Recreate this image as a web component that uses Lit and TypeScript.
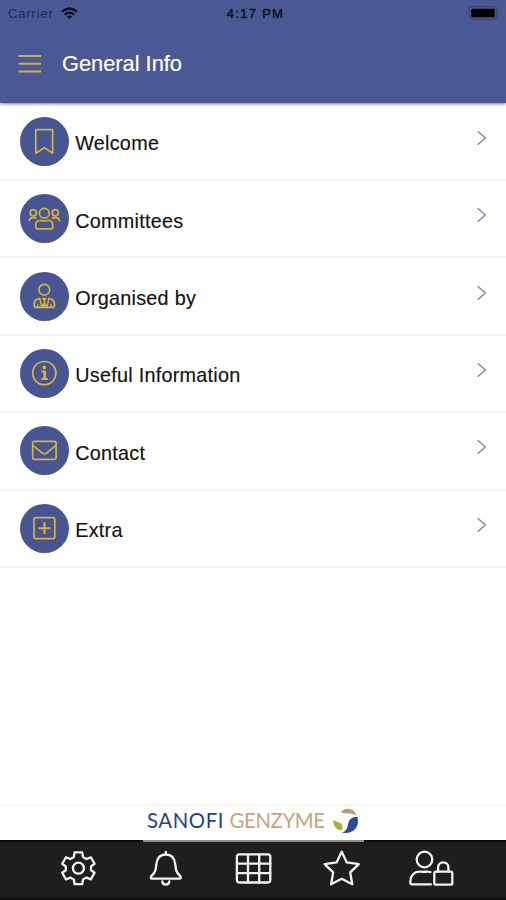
import { LitElement, html, svg, css } from "lit";
import { customElement } from "lit/decorators.js";

// Row icons are drawn on a 49x49 disc centred at 24.5,24.5.
const bookmark = svg`<path d="M15.8 12.6H32.6V36.2L24.2 30.6L15.8 36.2Z"/>`;
const group = svg`
  <circle cx="24.3" cy="19.3" r="4.9"/>
  <circle cx="13.3" cy="18.7" r="3.1"/><circle cx="35.3" cy="18.7" r="3.1"/>
  <path d="M19.5 26.5C21.5 26.2 22.4 27 24.3 27S27.1 26.2 29.1 26.5C31.7 26.8 32.8 29 32.8 31.3V33.2Q32.8 34.8 31 34.8H17.6Q15.8 34.8 15.8 33.2V31.3C15.8 29 16.9 26.8 19.5 26.5Z"/>
  <path d="M9.1 27.3C9.3 24.6 11 23.7 13.5 23.7Q15.4 23.7 16.7 24.6M39.5 27.3C39.3 24.6 37.6 23.7 35.1 23.7Q33.2 23.7 31.9 24.6"/>`;
const manager = svg`
  <circle cx="24.3" cy="17.7" r="5.4"/>
  <path d="M20.2 26.4C16.4 26.7 14.2 29.2 14.2 32.4V33.7Q14.2 35.4 16 35.4H32.6Q34.4 35.4 34.4 33.7V32.4C34.4 29.2 32.2 26.7 28.4 26.4"/>
  <path d="M19.8 26.5L21.6 35.2L24.3 31L27 35.2L28.8 26.5M22.8 26.4H25.8L24.3 28.4ZM24.3 28.4V34.8M17.6 32.3V35M31 32.3V35" stroke-width="1.5"/>`;
const info = svg`
  <circle cx="24.3" cy="24.1" r="11.6"/>
  <circle cx="24.2" cy="18.4" r="1.9" fill="#d9b33c" stroke="none"/>
  <path d="M21.3 22.5H25.1V29.6M21.3 30H27.8" stroke-width="2"/><path d="M24.5 22.5V30" stroke-width="2.4"/>`;
const mail = svg`
  <rect x="12.7" y="15.3" width="23.4" height="18" rx="1.6"/>
  <path d="M13 19.3L21.4 26.3Q24.4 29.3 27.4 26.3L35.8 19.3"/>`;
const plus = svg`
  <rect x="14" y="13.6" width="20.8" height="21" rx="1.8"/>
  <path d="M24.4 18.3V30M18.4 24.2H30.4" stroke-width="2"/>`;

const ROWS = [
  { label: "Welcome", icon: bookmark },
  { label: "Committees", icon: group },
  { label: "Organised by", icon: manager },
  { label: "Useful Information", icon: info },
  { label: "Contact", icon: mail },
  { label: "Extra", icon: plus },
];

@customElement("app-root")
export class AppRoot extends LitElement {
  static styles = css`
    :host {
      display: flex;
      flex-direction: column;
      height: 900px;
      box-sizing: border-box;
      background: #fff;
      font-family: "Liberation Sans", Arial, sans-serif;
      color: #111;
      overflow: hidden;
    }
    svg { display: block; }
    .header {
      flex: none;
      height: 103px;
      background: #4a5993;
      box-shadow: 0 1px 3px rgba(0, 0, 0, 0.5);
      z-index: 1;
    }
    .status {
      height: 26px;
      display: grid;
      grid-template-columns: 1fr auto 1fr;
      align-items: center;
      padding: 0 6px 0 8px;
      font-size: 13px;
      color: #10121c;
    }
    .carrier { display: flex; align-items: center; gap: 8px; letter-spacing: 0.85px; color: #252c48; }
    .carrier svg { margin-left: -1px; }
    .time { margin-left: 3px; letter-spacing: 1.3px; -webkit-text-stroke: 0.5px #10121c; }
    .battery { justify-self: end; }
    .bar { height: 77px; display: flex; align-items: center; padding: 0 18px; }
    .menu { margin-bottom: 2px; }
    .title {
      margin: 0 0 1px 20px;
      font-size: 21.8px;
      font-weight: 400;
      color: #fff;
      line-height: 26px;
      -webkit-text-stroke: 0.2px #fff;
    }
    .list { flex: 1; margin: 0; padding: 0.6px 0 0; list-style: none; }
    .row {
      height: 77.4px;
      box-sizing: border-box;
      border-bottom: 2px solid #f3f3f4;
      display: flex;
      align-items: center;
      padding: 0 19px 0 20px;
    }
    .disc { width: 49px; height: 49px; border-radius: 50%; background: #475593; }
    .label {
      flex: 1;
      margin: 4px 0 0 6.2px;
      font-size: 19.8px;
      letter-spacing: 0.27px;
      line-height: 24px;
      -webkit-text-stroke: 0.15px #111;
    }
    .chevron { margin-bottom: 7px; }
    .sponsor {
      flex: none;
      height: 34px;
      border-top: 2px solid #f7f7f7;
      display: flex;
      justify-content: center;
      padding-right: 1px;
    }
    .tabs {
      flex: none;
      height: 60px;
      box-sizing: border-box;
      background: linear-gradient(#1e1e1c 55px, #130d10 57px);
      border-top: 2px solid;
      border-image: linear-gradient(90deg, #0b0b0a 143px, #8d8d85 143px, #8d8d85 364px, #0b0b0a 364px) 1;
      display: flex;
      justify-content: center;
    }
  `;

  render() {
    return html`
      <header class="header">
        <div class="status">
          <div class="carrier">
            <span>Carrier</span>
            <svg width="17" height="13" viewBox="0 0 17 13" fill="none" stroke="#0c0e18" stroke-width="2.2">
              <path d="M1 4.7Q8.5-1.7 16 4.7M3.7 7.7Q8.5 3.6 13.3 7.7"/>
              <path d="M5.9 9.6Q8.5 7.5 11.1 9.6L8.5 12.3Z" fill="#0c0e18" stroke="none"/>
            </svg>
          </div>
          <div class="time">4:17 PM</div>
          <svg class="battery" width="32" height="14" viewBox="0 0 32 14">
            <rect x="1" y="0.6" width="27.6" height="12.8" rx="3" fill="none" stroke="#3c4672" stroke-width="1.2"/>
            <rect x="3.2" y="2.8" width="23.6" height="8.4" rx="1" fill="#000"/>
            <path d="M29.8 4.7Q32 7 29.8 9.3Z" fill="#3c4672"/>
          </svg>
        </div>
        <div class="bar">
          <svg class="menu" width="24" height="20" viewBox="0 0 24 20" stroke="#cdb05a" stroke-width="2">
            <path d="M0.5 2H23M0.5 9.7H23M0.5 17.4H23"/>
          </svg>
          <h1 class="title">General Info</h1>
        </div>
      </header>
      <ul class="list">
        ${ROWS.map(
          (row) => html`
            <li class="row">
              <div class="disc">
                <svg width="49" height="49" viewBox="0 0 49 49" fill="none" stroke="#d9b33c" stroke-width="1.7" stroke-linejoin="round">${row.icon}</svg>
              </div>
              <span class="label">${row.label}</span>
              <svg class="chevron" width="11" height="16" viewBox="0 0 11 16" fill="none" stroke="#7c7fa8" stroke-width="1.3">
                <path d="M1.7 1.2L9.4 8L1.7 14.8"/>
              </svg>
            </li>
          `
        )}
      </ul>
      <div class="sponsor">
        <svg width="216" height="34" viewBox="145 806 216 34" font-family="Lato, sans-serif" font-size="20.3">
          <text x="147" y="828.4" fill="#263f8e" textLength="76.5" lengthAdjust="spacing">SANOFI</text>
          <text x="229.5" y="828.4" fill="#c9a17d" textLength="95.5" lengthAdjust="spacing">GENZYME</text>
          <path d="M341 812C343.5 807.6 354.5 806.6 356.2 815.8C350.5 811.5 346 815.3 341 812Z" fill="#c2966f"/>
          <path d="M357.4 816.8C360.2 826.5 353.5 834.8 341.8 832.8C350.5 829.5 345.8 821.5 351.6 818.2Q354 816.8 357.4 816.8Z" fill="#2a4c9d"/>
          <path d="M333.2 819.6C336.5 823 341.3 821.5 342.6 826Q343.2 828.6 341.2 830.6C336.3 830 333.2 826 333.2 819.6Z" fill="#a5b52f"/>
        </svg>
      </div>
      <nav class="tabs">
        <svg width="506" height="58" viewBox="0 842 506 58" fill="none" stroke="#f2f2f2" stroke-width="2.3" stroke-linejoin="round" stroke-linecap="round">
          <path d="M74.6 852.4H82.2L83 857.1L86.4 859L90.8 857.2L94.6 863.8L91 866.4V870.2L94.6 872.8L90.8 879.4L86.4 877.6L83 879.5L82.2 884.2H74.6L73.8 879.5L70.4 877.6L66 879.4L62.2 872.8L65.8 870.2V866.4L62.2 863.8L66 857.2L70.4 859L73.8 857.1Z"/>
          <circle cx="78.4" cy="868.2" r="5.5"/>
          <path d="M165.8 852V854.2M152.4 878.7C149.9 878.7 150.6 876.7 152.2 875.2C155.5 872 155.8 869.5 156.3 864.5C156.9 858.3 160.3 854.5 165.8 854.5S174.7 858.3 175.3 864.5C175.8 869.5 176.1 872 179.4 875.2C181 876.7 181.7 878.7 179.2 878.7Z"/>
          <path d="M162.3 881.4C162.6 885.7 169 885.7 169.3 881.4"/>
          <rect x="236.9" y="854.3" width="33.4" height="28.2" rx="2.4"/>
          <path d="M248 854.3V882.5M259.2 854.3V882.5M236.9 863.7H270.3M236.9 873.1H270.3"/>
          <path d="M341.7 851.7L346.8 862.4L358.8 864.1L350.2 872.4L352.3 884.3L341.7 878.8L331.1 884.3L333.2 872.4L324.6 864.1L336.6 862.4Z"/>
          <circle cx="424.5" cy="859.5" r="7.8"/>
          <path d="M430.5 872C426.5 871 424.5 872.3 420 871.7C414 871.5 410.3 876 410.3 881.5V882.5Q410.3 884.3 412.2 884.3H431"/>
          <rect x="434.3" y="871.7" width="18" height="13" rx="1.8"/>
          <path d="M438.1 871.5V867.4C438.1 860.6 448.4 860.6 448.4 867.4V871.5"/>
        </svg>
      </nav>
    `;
  }
}
